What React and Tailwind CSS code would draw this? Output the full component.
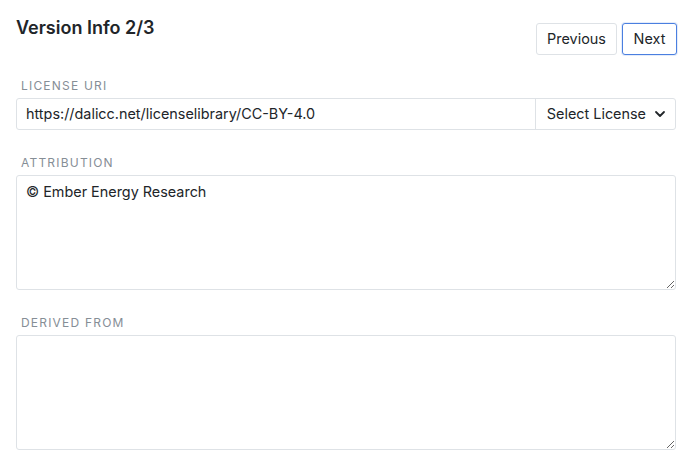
import React from "react";

const Label = ({ children }) => (
  <div className="text-[12px] tracking-[0.1em] text-[#868e96] uppercase leading-4 pl-[5px] mb-[4px]">
    {children}
  </div>
);

export default function App() {
  return (
    <div
      className="w-[696px] h-[465px] bg-white text-[#212529] pl-4 pr-5 pt-[16px] overflow-hidden"
      style={{ fontFamily: "Inter, 'Liberation Sans', sans-serif" }}
    >
      <div className="flex justify-between items-start">
        <h1 className="text-[18px] font-semibold leading-6">Version Info 2/3</h1>
        <div className="flex gap-[5px] mt-[7px] -mr-px">
          <button className="w-[81px] h-[32px] text-[14.4px] border border-[#dee2e6] rounded-[3px] bg-white">
            Previous
          </button>
          <button className="w-[55px] h-[32px] text-[14.4px] border border-[#4a7fe0] rounded-[3px] bg-white shadow-[0_0_0_1px_rgba(74,127,224,0.15)]">
            Next
          </button>
        </div>
      </div>

      <div className="mt-[23px]">
        <Label>License URI</Label>
        <div className="flex h-[32px] border border-[#dee2e6] rounded-[3px] text-[14.4px]">
          <div className="flex-1 flex items-center px-[9px]">
            https://dalicc.net/licenselibrary/CC-BY-4.0
          </div>
          <div className="flex items-center gap-[8px] pl-[11px] pr-[9px] border-l border-[#dee2e6]">
            Select License
            <svg width="12" height="12" viewBox="0 0 12 12" fill="none">
              <path d="M2 4l4 4 4-4" stroke="#212529" strokeWidth="1.8" strokeLinecap="round" strokeLinejoin="round" />
            </svg>
          </div>
        </div>
      </div>

      <div className="mt-[25px]">
        <Label>Attribution</Label>
        <textarea
          className="block w-full h-[115px] border border-[#dee2e6] rounded-[3px] px-[9px] py-[6px] text-[14.4px] leading-5 resize-y"
          defaultValue="© Ember Energy Research"
        />
      </div>

      <div className="mt-[25px]">
        <Label>Derived From</Label>
        <textarea
          className="block w-full h-[115px] border border-[#dee2e6] rounded-[3px] px-[9px] py-[6px] text-[14.4px] leading-5 resize-y"
        />
      </div>
    </div>
  );
}
